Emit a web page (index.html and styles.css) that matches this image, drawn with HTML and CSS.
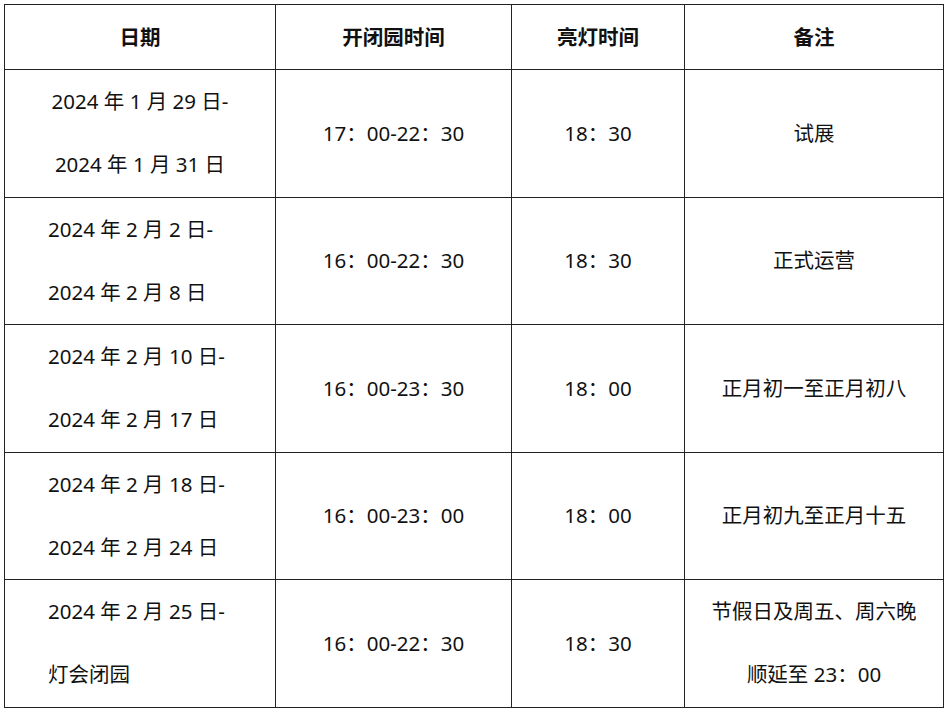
FILE: index.html
```html
<!DOCTYPE html>
<html lang="zh">
<head>
<meta charset="utf-8">
<link rel="stylesheet" href="styles.css">
</head>
<body>
<table class="schedule">
  <colgroup>
    <col class="c1"><col class="c2"><col class="c3"><col class="c4">
  </colgroup>
  <thead>
    <tr><th>日期</th><th>开闭园时间</th><th>亮灯时间</th><th>备注</th></tr>
  </thead>
  <tbody>
    <tr>
      <td class="center"><p>2024 年 1 月 29 日-</p><p>2024 年 1 月 31 日</p></td>
      <td>17：00-22：30</td>
      <td>18：30</td>
      <td>试展</td>
    </tr>
    <tr>
      <td class="date"><p>2024 年 2 月 2 日-</p><p>2024 年 2 月 8 日</p></td>
      <td>16：00-22：30</td>
      <td>18：30</td>
      <td>正式运营</td>
    </tr>
    <tr>
      <td class="date"><p>2024 年 2 月 10 日-</p><p>2024 年 2 月 17 日</p></td>
      <td>16：00-23：30</td>
      <td>18：00</td>
      <td>正月初一至正月初八</td>
    </tr>
    <tr>
      <td class="date"><p>2024 年 2 月 18 日-</p><p>2024 年 2 月 24 日</p></td>
      <td>16：00-23：00</td>
      <td>18：00</td>
      <td>正月初九至正月十五</td>
    </tr>
    <tr>
      <td class="date"><p>2024 年 2 月 25 日-</p><p>灯会闭园</p></td>
      <td>16：00-22：30</td>
      <td>18：30</td>
      <td><p>节假日及周五、周六晚</p><p>顺延至 23：00</p></td>
    </tr>
  </tbody>
</table>
</body>
</html>
```
FILE: styles.css
```css
html, body {
  margin: 0;
  padding: 0;
  background: #fff;
}
body {
  padding: 4px 0 0 4px;
  font-family: "Noto Sans", "Noto Sans CJK SC", sans-serif;
  color: #111;
}
.schedule {
  border-collapse: collapse;
  table-layout: fixed;
  width: 939px;
  font-size: 20.5px;
}
.c1 { width: 271px; }
.c2 { width: 236px; }
.c3 { width: 173px; }
.c4 { width: 259px; }
.schedule th,
.schedule td {
  border: 1px solid #222;
  text-align: center;
  vertical-align: middle;
  padding: 0;
  line-height: 63.25px;
}
.schedule th {
  height: 64px;
  font-weight: bold;
  line-height: 64px;
}
.schedule td {
  height: 126.5px;
}
.schedule p {
  margin: 0;
}
.schedule td.date {
  text-align: left;
  padding-left: 43px;
}
```
